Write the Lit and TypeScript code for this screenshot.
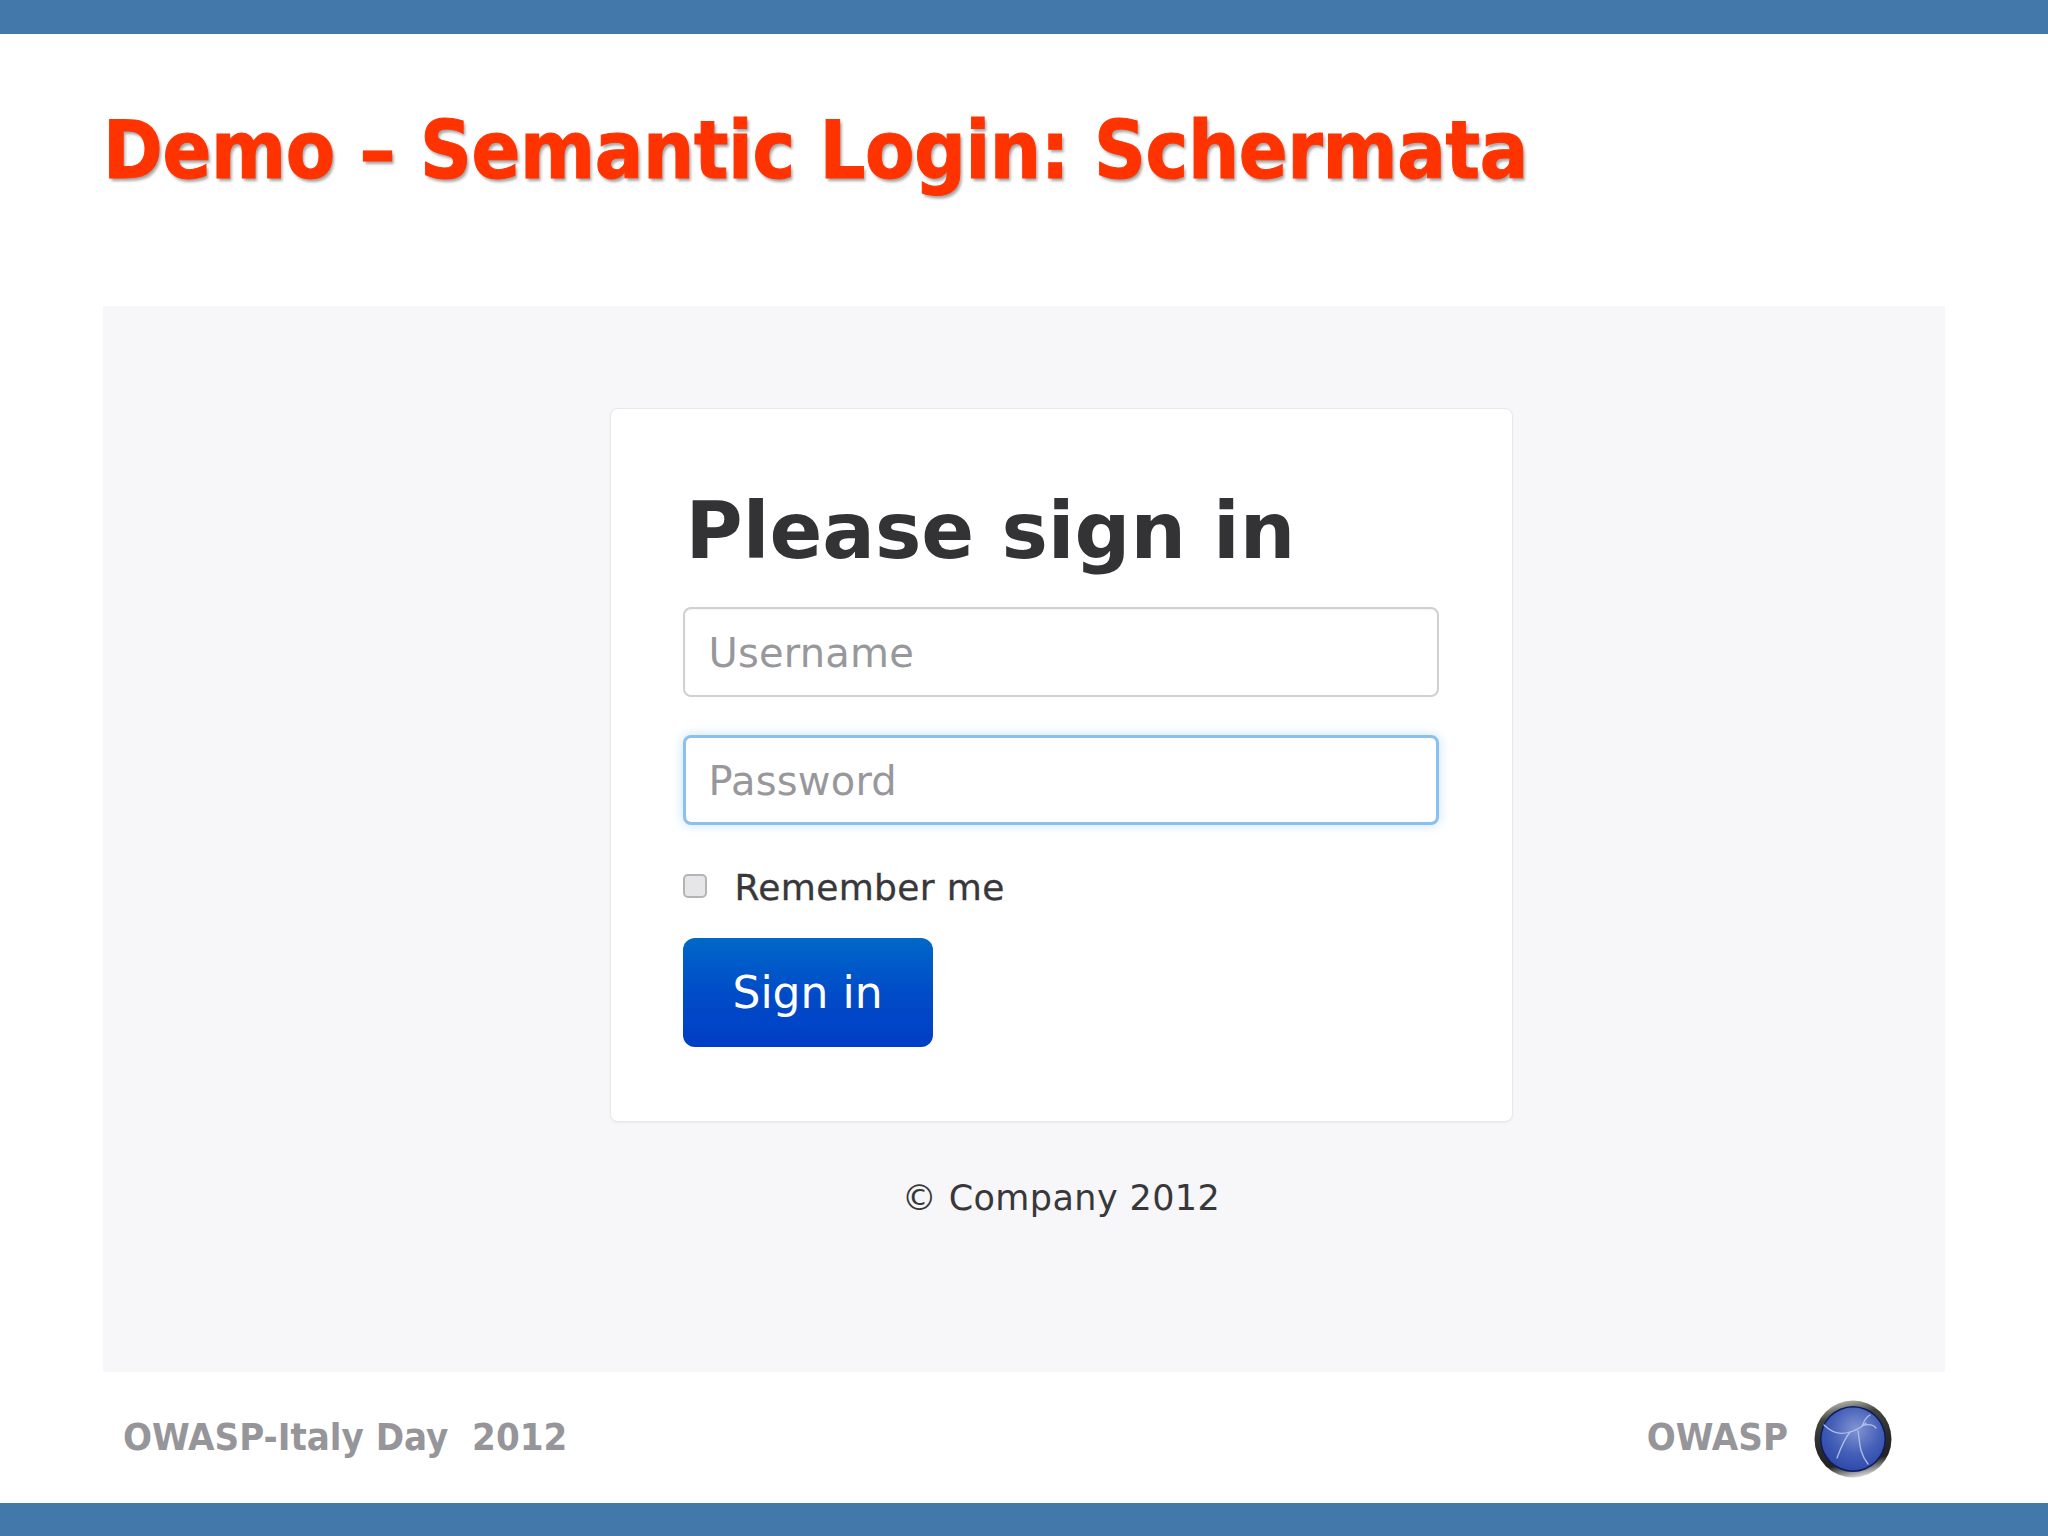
import { LitElement, html, css } from "lit";
import { customElement } from "lit/decorators.js";

@customElement("app-root")
export class AppRoot extends LitElement {
  static styles = css`
    :host { display: block; width: 2048px; height: 1536px; background: #fff; overflow: hidden; }
    .page { display: flex; flex-direction: column; width: 2048px; height: 1536px; }
    .bar { height: 34px; background: #4378aa; flex: none; }
    .bar.bottom { height: 33px; }
    .head { height: 272px; flex: none; padding: 71px 0 0 103px; box-sizing: border-box; }
    h1.title {
      margin: 0; font: bold 80px/92px "DejaVu Sans Condensed", "DejaVu Sans", sans-serif;
      color: #ff3300; text-shadow: 2px 3px 3px rgba(90,90,90,.55); white-space: pre; letter-spacing: -0.3px;
      -webkit-text-stroke: 1px #ff3300;
    }
    .panel {
      height: 1066px; margin: 0 103px; flex: none; background: #f7f6f8;
      display: flex; flex-direction: column; align-items: center; padding: 102px 0 0 74px; box-sizing: border-box;
      font-family: "DejaVu Sans", sans-serif;
    }
    .card {
      width: 903px; height: 714px; flex: none; box-sizing: border-box; background: #fff; border-radius: 8px;
      border: 1px solid #e8e8ec; padding: 77px 73px 0 72px;
      display: flex; flex-direction: column; box-shadow: 0 1px 2px rgba(0,0,0,.05);
    }
    h2 { margin: 0 0 0 3px; font: bold 78px/90px "DejaVu Sans", sans-serif; color: #333336; height: 121px; }
    .inp {
      display: block; width: 100%; height: 90px; box-sizing: border-box; border: 2px solid #d0d0d2; border-radius: 8px;
      padding: 2px 24px 0; background: #fff; outline: none; font: 40px "DejaVu Sans", sans-serif; flex: none;
      letter-spacing: .2px; box-shadow: inset 0 1px 2px rgba(0,0,0,.05);
    }
    .inp::placeholder { color: #98989c; opacity: 1; }
    .inp.focus { margin-top: 38px; border: 3px solid #8ac0f0; padding: 2px 23px 0; box-shadow: 0 0 12px rgba(130,190,240,.45); }
    .rem { display: flex; align-items: center; margin-top: 42px; height: 40px; gap: 28px; font-size: 36px; letter-spacing: .35px; color: #38383b; -webkit-text-stroke: .3px #38383b; }
    .box {
      width: 24px; height: 24px; box-sizing: border-box; border: 2px solid #b4b4b7; border-radius: 5px;
      background: #e6e6e9; flex: none; margin-top: -2px;
    }
    .btn {
      margin-top: 31px; width: 250px; height: 109px; flex: none; border: none; border-radius: 12px; padding: 0; color: #fff;
      font: 44px "DejaVu Sans", sans-serif; background: linear-gradient(#0068c8 0%, #004cc8 50%, #003ec6 100%);
    }
    .copy { margin-top: 52px; font-size: 35px; line-height: 48px; letter-spacing: .4px; color: #38383b; }
    .foot {
      flex: 1; display: flex; align-items: center; justify-content: space-between; padding: 0 156px 2px 123px;
      font: bold 38px "DejaVu Sans Condensed", "DejaVu Sans", sans-serif; color: #96959a; box-sizing: border-box; white-space: pre;
    }
    .brand { display: flex; align-items: center; gap: 26px; }
    svg { display: block; margin-top: 5px; }
  `;

  render() {
    return html`
      <div class="page">
        <div class="bar"></div>
        <div class="head"><h1 class="title">Demo – Semantic Login: Schermata</h1></div>
        <div class="panel">
          <div class="card">
            <h2>Please sign in</h2>
            <input class="inp" placeholder="Username" />
            <input class="inp focus" placeholder="Password" />
            <div class="rem"><span class="box"></span><span>Remember me</span></div>
            <button class="btn">Sign in</button>
          </div>
          <div class="copy">© Company 2012</div>
        </div>
        <div class="foot">
          <span>OWASP-Italy Day  2012</span>
          <span class="brand">
            <span>OWASP</span>
            <svg width="78" height="78" viewBox="0 0 78 78">
              <defs>
                <linearGradient id="ring" x1="0.35" y1="0" x2="0.55" y2="1">
                  <stop offset="0" stop-color="#b8b8b2" />
                  <stop offset="0.2" stop-color="#44443f" />
                  <stop offset="0.55" stop-color="#2a2a2a" />
                  <stop offset="0.8" stop-color="#222" />
                  <stop offset="1" stop-color="#d8d8d8" />
                </linearGradient>
                <radialGradient id="ball" cx="0.55" cy="0.35" r="0.7">
                  <stop offset="0" stop-color="#8294d2" />
                  <stop offset="0.55" stop-color="#4560b8" />
                  <stop offset="1" stop-color="#2b46a8" />
                </radialGradient>
              </defs>
              <circle cx="39" cy="39" r="38.5" fill="url(#ring)" />
              <circle cx="39" cy="39" r="33" fill="#0c1c5c" />
              <circle cx="39" cy="39" r="31.5" fill="url(#ball)" />
              <g fill="none" stroke="#aebfea" stroke-width="1.3" stroke-linecap="round">
                <path d="M10 25 C18 33 27 35 36 32 C43 30 48 27 52 23" />
                <path d="M36 32 C29 41 26 50 23 58" />
                <path d="M44 31 C46 42 45 53 54 64" />
                <path d="M48 26 C50 21 52 17 56 15" />
                <path d="M50 25 C55 24 59 24 62 28" />
              </g>
            </svg>
          </span>
        </div>
        <div class="bar bottom"></div>
      </div>
    `;
  }
}
